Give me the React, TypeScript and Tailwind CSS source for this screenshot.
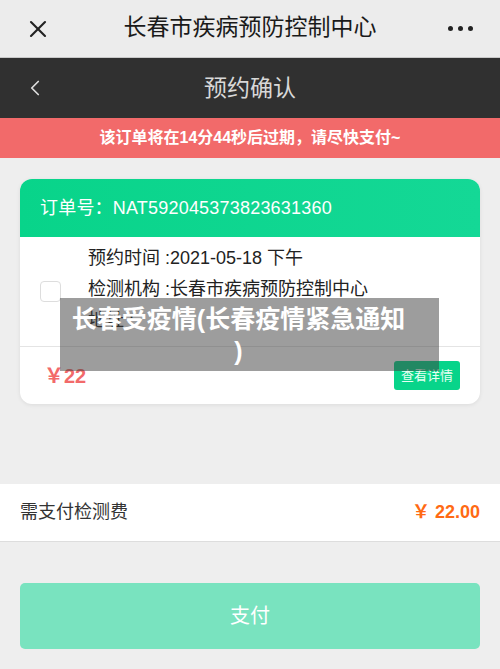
import { X, ChevronLeft } from 'lucide-react'

const font = { fontFamily: '"Liberation Sans", "Noto Sans CJK SC", sans-serif' }

export default function App() {
  return (
    <div style={font} className="w-[500px] h-[669px] bg-[#eeeeee] flex flex-col overflow-hidden">
      <TopBar />
      <div className="h-[60px] bg-[#303030] flex items-center relative">
        <ChevronLeft className="absolute left-[22px] size-[26px] text-[#dddddd]" strokeWidth={1.6} />
        <p className="w-full text-center text-[23px] text-[#d8d8d8]">预约确认</p>
      </div>
      <div className="h-[40px] bg-[#f26a6a] flex items-center justify-center">
        <p className="text-[16px] font-bold text-white">该订单将在14分44秒后过期，请尽快支付~</p>
      </div>
      <OrderCard />
      <div className="mt-[80px] h-[58px] bg-white border-b border-[#dddddd] flex items-center justify-between px-[20px]">
        <p className="text-[18px] text-[#333333]">需支付检测费</p>
        <p className="text-[18px] font-bold text-[#ff6a13]">￥ 22.00</p>
      </div>
      <button className="mx-[20px] mt-[41px] h-[66px] rounded-[5px] bg-[#79e3bf] text-white text-[20px]">支付</button>
    </div>
  )
}

function TopBar() {
  return (
    <div className="h-[58px] bg-[#ececec] border-b border-[#c8c8c8] flex items-center relative">
      <X className="absolute left-[24px] size-[28px] text-[#222222]" strokeWidth={1.8} />
      <p className="w-full text-center text-[23px] text-[#1a1a1a] -mt-[3px]">长春市疾病预防控制中心</p>
      <div className="absolute right-[27px] flex gap-[5px]">
        <span className="size-[5px] rounded-full bg-[#222222]" />
        <span className="size-[5px] rounded-full bg-[#222222]" />
        <span className="size-[5px] rounded-full bg-[#222222]" />
      </div>
    </div>
  )
}

function OrderCard() {
  return (
    <div className="mx-[20px] mt-[21px] h-[225px] rounded-[12px] bg-white shadow-[0_1px_4px_rgba(0,0,0,0.08)] overflow-hidden relative flex flex-col">
      <div className="h-[58px] bg-gradient-to-r from-[#08d48a] to-[#14d896] flex items-center px-[20px]">
        <p className="text-[18px] text-white tracking-[0.2px]">订单号：NAT592045373823631360</p>
      </div>
      <div className="h-[110px] border-b border-[#e4e4e4] flex items-center pl-[20px]">
        <span className="size-[21px] rounded-[4px] border border-[#dddddd] shrink-0" />
        <div className="ml-[27px] flex flex-col text-[18px] text-[#222222] leading-[31px] -mt-[4px]">
          <p>预约时间 :2021-05-18 下午</p>
          <p>检测机构 :长春市疾病预防控制中心</p>
          <p>地址 :</p>
        </div>
      </div>
      <div className="flex-1 flex items-center justify-between px-[24px] pr-[20px]">
        <p className="text-[20px] font-bold text-[#f26a6a]">￥22</p>
        <button className="h-[29px] px-[7px] rounded-[3px] bg-[#08d48a] text-[13px] text-[#e8fff4]">查看详情</button>
      </div>
      <div className="absolute left-[40px] top-[119px] w-[379px] h-[73px] bg-[rgba(60,60,60,0.5)] flex items-center justify-center pr-[22px]">
        <p className="text-[25px] font-bold text-white text-center leading-[32px]">
          长春受疫情(长春疫情紧急通知
          <br />)
        </p>
      </div>
    </div>
  )
}
